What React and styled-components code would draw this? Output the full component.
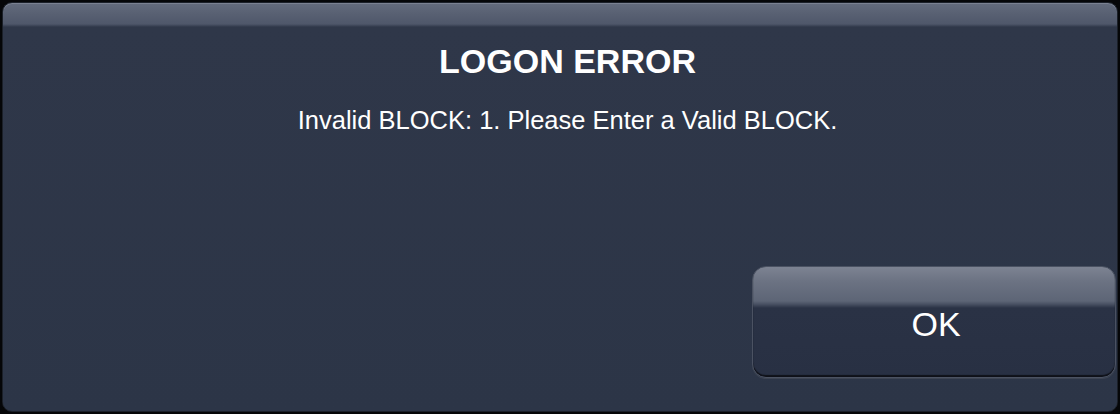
import React from 'react';
import styled, { createGlobalStyle } from 'styled-components';

const App = () => {
  return (
    <>
      <GlobalStyles />
      <Dialog>
        <Title>LOGON ERROR</Title>
        <Message>Invalid BLOCK: 1. Please Enter a Valid BLOCK.</Message>
        <Footer>
          <Button type="button">OK</Button>
        </Footer>
      </Dialog>
    </>
  )
}

export default App

const GlobalStyles = createGlobalStyle`
* {
  margin: 0;
  padding: 0;
  box-sizing: border-box;
}
html, body {
  background: #050608;
  width: 1120px;
  height: 414px;
  overflow: hidden;
}
body {
  font-family: 'Liberation Sans', Arial, sans-serif;
}
`

const Dialog = styled.div`
  margin: 2px;
  width: 1116px;
  height: 410px;
  border: 1px solid #1b2029;
  border-radius: 10px;
  background: linear-gradient(
    to bottom,
    #646c7d 0px,
    #596173 10px,
    #4f576a 21px,
    #2f3749 24px,
    #2c3547 100%
  );
  box-shadow: inset 0 1px 0 #7a8191;
  display: flex;
  flex-direction: column;
  align-items: center;
  padding: 38px 1px 33px 16px;
  color: #fff;
`

const Title = styled.h1`
  font-size: 34px;
  line-height: 40px;
  font-weight: 700;
`

const Message = styled.p`
  margin-top: 24px;
  font-size: 25.5px;
  line-height: 30px;
`

const Footer = styled.div`
  margin-top: auto;
  align-self: stretch;
  display: flex;
  justify-content: flex-end;
`

const Button = styled.button`
  width: 364px;
  height: 112px;
  border: 1px solid #4b5262;
  border-radius: 14px;
  background: linear-gradient(
    to bottom,
    #7d8392 0px,
    #6c7383 14px,
    #5d6576 34px,
    #4a5264 37px,
    #2a3245 41px,
    #283043 100%
  );
  box-shadow: inset 0 -2px 1px rgba(10, 12, 18, 0.85), 0 1px 0 #3d4452;
  color: #fff;
  font-family: 'Liberation Sans', Arial, sans-serif;
  font-size: 34px;
  padding-top: 4px;
  padding-left: 4px;
  cursor: pointer;
`
